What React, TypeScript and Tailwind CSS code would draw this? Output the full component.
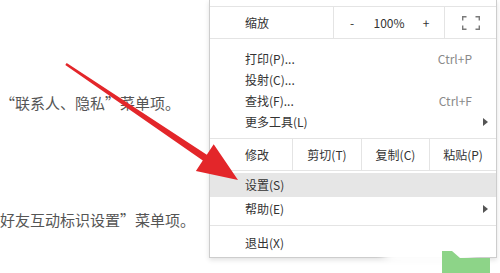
import { ReactNode } from 'react';

const font = { fontFamily: '"Microsoft YaHei", "Noto Sans CJK SC", "Noto Sans", sans-serif' };

function Item({ label, shortcut, sub }: { label: string; shortcut?: string; sub?: boolean }) {
  return (
    <div className="flex items-center h-[21px] pl-[35px]">
      <span className="flex-1">{label}</span>
      {shortcut && <span className="pr-[24px] text-[#8a8a8a]">{shortcut}</span>}
      {sub && <Caret />}
    </div>
  );
}

function Caret() {
  return (
    <svg width="5" height="8" viewBox="0 0 5 8" className="mr-[8px]">
      <path d="M0 0 L5 4 L0 8 Z" fill="#555" />
    </svg>
  );
}

function Cell({ children, className = '' }: { children: ReactNode; className?: string }) {
  return <div className={`flex items-center justify-center border-l border-[#e4e4e4] ${className}`}>{children}</div>;
}

export default function App() {
  return (
    <div className="relative flex w-[500px] h-[273px] overflow-hidden bg-white" style={font}>
      <div className="w-[209px] shrink-0 text-[15px] leading-[22px] text-[#555]">
        <p className="mt-[92px] whitespace-nowrap">“联系人、隐私”菜单项。</p>
        <p className="mt-[95px] whitespace-nowrap">好友互动标识设置”菜单项。</p>
      </div>

      <div className="w-[288px] h-[258px] shrink-0 border-x border-b border-[#cdcdcd] bg-white text-[12px] text-[#333] shadow-[0_2px_5px_rgba(0,0,0,0.12)]">
        <div className="h-[7px] border-b border-[#e4e4e4]" />

        <div className="flex h-[32px] border-b border-[#e4e4e4]">
          <div className="flex items-center w-[123px] pl-[35px]">缩放</div>
          <Cell className="w-[111px] justify-between! px-[14px]">
            <span className="w-[8px] text-center">-</span>
            <span>100%</span>
            <span className="w-[8px] text-center">+</span>
          </Cell>
          <Cell className="flex-1">
            <svg width="18" height="14" viewBox="0 0 18 14" fill="none" stroke="#7a7a7a" strokeWidth="1.4">
              <path d="M0.7 4.5 V0.7 H4.5 M13.5 0.7 H17.3 V4.5 M17.3 9.5 V13.3 H13.5 M4.5 13.3 H0.7 V9.5" />
            </svg>
          </Cell>
        </div>

        <div className="pt-[9px] pb-[6px] border-b border-[#e4e4e4]">
          <Item label="打印(P)..." shortcut="Ctrl+P" />
          <Item label="投射(C)..." />
          <Item label="查找(F)..." shortcut="Ctrl+F" />
          <Item label="更多工具(L)" sub />
        </div>

        <div className="flex h-[32px] border-b border-[#e4e4e4]">
          <div className="flex items-center w-[82px] pl-[35px]">修改</div>
          <Cell className="w-[69px]">剪切(T)</Cell>
          <Cell className="w-[68px]">复制(C)</Cell>
          <Cell className="flex-1">粘贴(P)</Cell>
        </div>

        <div className="pt-[2px] pb-[4px] border-b border-[#e4e4e4]">
          <div className="flex items-center h-[24px] pl-[35px] bg-[#e6e6e6]">设置(S)</div>
          <div className="flex items-center h-[24px] pl-[35px]">
            <span className="flex-1">帮助(E)</span>
            <Caret />
          </div>
        </div>

        <div className="pt-[6px]">
          <div className="flex items-center h-[22px] pl-[35px]">退出(X)</div>
        </div>
      </div>

      {/* watermark smear */}
      <div className="absolute left-[382px] top-[236px] w-[92px] h-[28px] rounded-full bg-white blur-[4px]" />

      {/* green corner shape */}
      <svg className="absolute left-0 top-0 pointer-events-none" width="500" height="273">
        <polygon points="442,251 452,251 460,258 490,258 490,273 442,273" fill="#8dd488" />
      </svg>

      {/* red arrow */}
      <svg className="absolute left-0 top-0 pointer-events-none" width="500" height="273">
        <polygon
          points="65.3,65 202.8,160.5 195.9,170.9 238,180 213.7,144.3 206.8,154.7 66.7,63"
          fill="#e3262a"
        />
      </svg>
    </div>
  );
}
